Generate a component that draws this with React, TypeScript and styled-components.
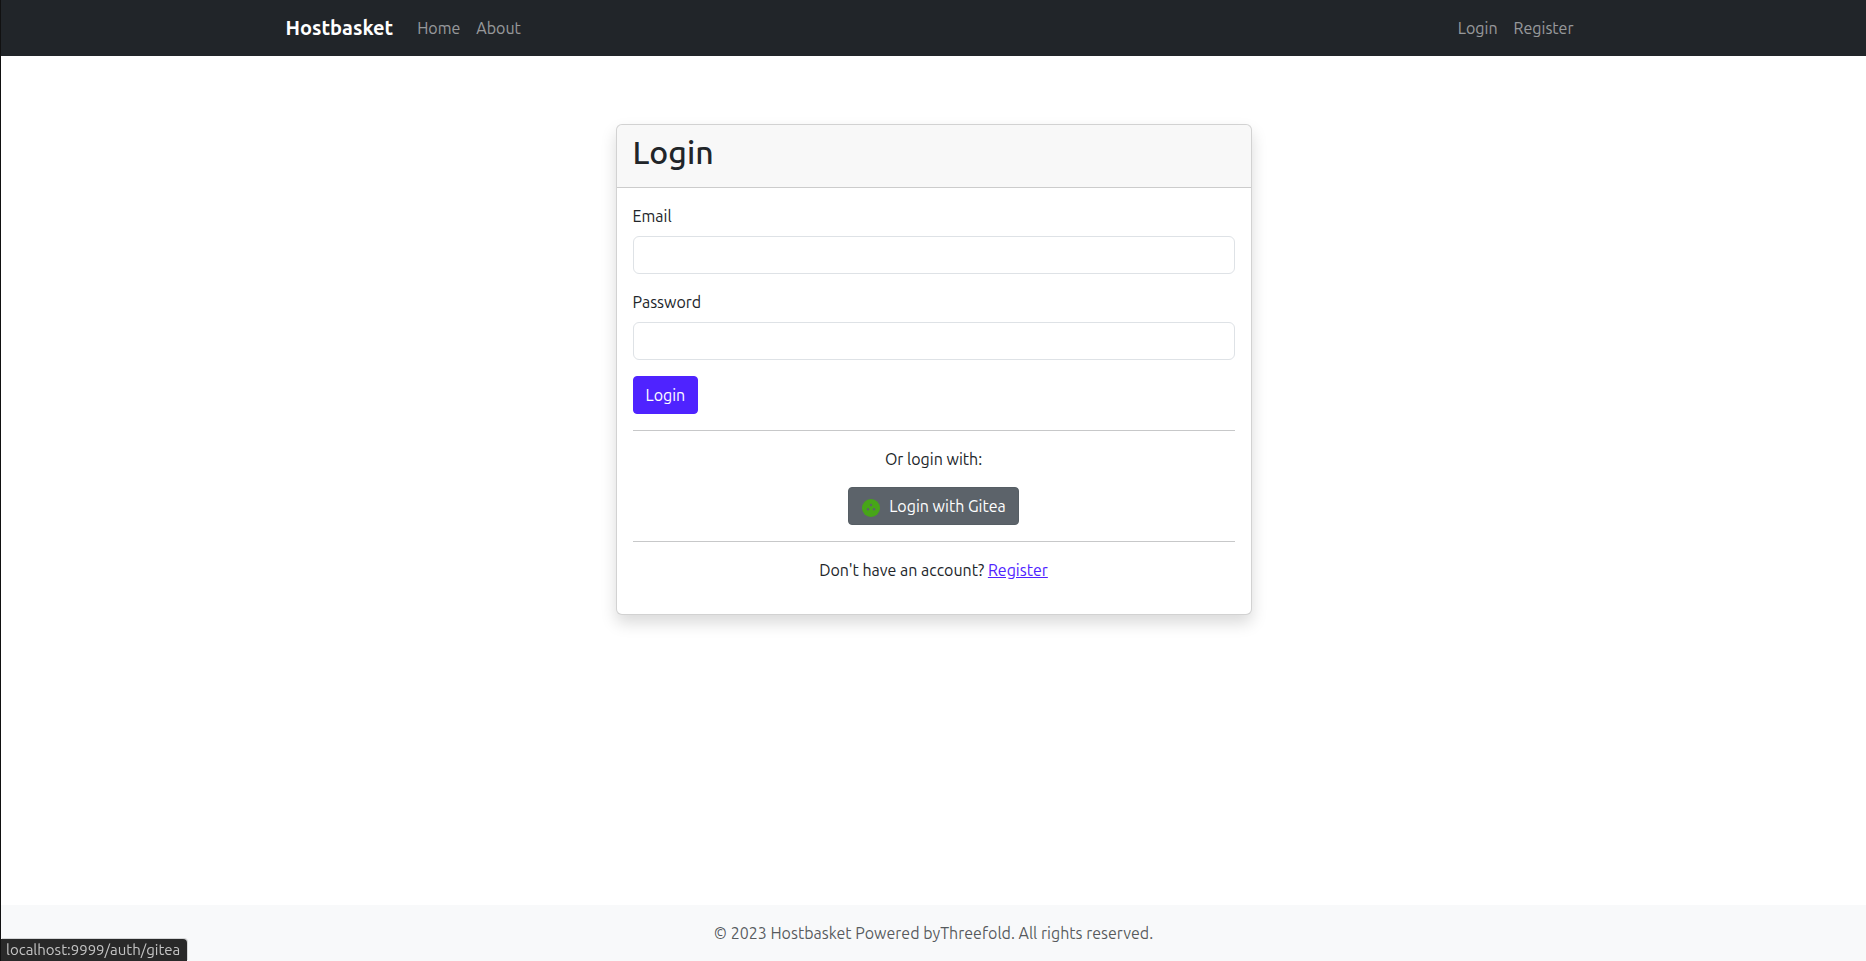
import React from "react";
import styled, { createGlobalStyle } from "styled-components";

const GlobalStyle = createGlobalStyle`
  *, *::before, *::after { box-sizing: border-box; }
  body {
    margin: 0;
    background: #fff;
    color: #212529;
    font-family: Ubuntu, "Noto Sans", "Liberation Sans", sans-serif;
    font-size: 16px;
    line-height: 24px;
  }
`;

const Page = styled.div`
  display: flex;
  flex-direction: column;
  min-height: 100vh;
  border-left: 1px solid #111;
`;

const Navbar = styled.nav`
  background: #212529;
  padding: 8px 0;
`;

const Container = styled.div`
  width: 100%;
  max-width: 1320px;
  margin: 0 auto;
  padding: 0 12px;
`;

const NavContainer = styled(Container)`
  display: flex;
  align-items: center;
`;

const Brand = styled.a`
  margin-right: 16px;
  padding: 5px 0;
  color: #fff;
  font-size: 20px;
  line-height: 30px;
  font-weight: 700;
  text-decoration: none;
`;

const NavList = styled.ul<{ $end?: boolean }>`
  display: flex;
  margin: 0 0 0 ${(p) => (p.$end ? "auto" : "0")};
  padding: 0;
  list-style: none;
`;

const NavLink = styled.a`
  display: block;
  padding: 8px;
  color: rgba(255, 255, 255, 0.55);
  text-decoration: none;
`;

const Main = styled.main`
  flex: 1 0 auto;
  padding-top: 68px;
`;

const Row = styled.div`
  display: flex;
  justify-content: center;
  margin: 0 -12px;
`;

const CardColumn = styled.div`
  flex: 0 0 50%;
  padding: 0 12px;
`;

const Card = styled.section`
  border: 1px solid rgba(0, 0, 0, 0.176);
  border-radius: 6px;
  background: #fff;
  box-shadow: 0 8px 16px rgba(0, 0, 0, 0.15);
`;

const CardHeader = styled.header`
  padding: 8px 16px 16px;
  border-bottom: 1px solid rgba(0, 0, 0, 0.176);
  border-radius: 5px 5px 0 0;
  background: rgba(33, 37, 41, 0.03);
`;

const Title = styled.h2`
  margin: 0;
  font-size: 32px;
  line-height: 38px;
  font-weight: 500;
`;

const CardBody = styled.div`
  padding: 16px;
`;

const Field = styled.div`
  display: flex;
  flex-direction: column;
  gap: 8px;
  margin-bottom: 16px;
`;

const Input = styled.input`
  width: 100%;
  height: 38px;
  padding: 6px 12px;
  border: 1px solid #dee2e6;
  border-radius: 6px;
  background: #fff;
  color: inherit;
  font: inherit;
`;

const Button = styled.button<{ $tone: "primary" | "secondary" }>`
  padding: 6px 12px;
  border: 1px solid ${(p) => (p.$tone === "primary" ? "#4f23ff" : "#565e64")};
  border-radius: 4px;
  background: ${(p) => (p.$tone === "primary" ? "#4f23ff" : "#5c636a")};
  color: #fff;
  font: inherit;
  cursor: pointer;
`;

const Divider = styled.hr`
  margin: 16px 0;
  border: 0;
  border-top: 1px solid #212529;
  opacity: 0.25;
`;

const Centered = styled.div`
  text-align: center;
`;

const Text = styled.p`
  margin: 0 0 16px;
`;

const TextLink = styled.a`
  color: #4f23ff;
  text-decoration: underline;
`;

const Icon = styled.svg`
  width: 20px;
  height: 20px;
  margin-right: 8px;
  vertical-align: middle;
`;

const Footer = styled.footer`
  padding: 16px 0;
  background: #f8f9fa;
  color: rgba(33, 37, 41, 0.75);
  text-align: center;
`;

const StatusBubble = styled.div`
  position: fixed;
  left: 1px;
  bottom: 0;
  padding: 0 7px 0 5px;
  border-top-right-radius: 4px;
  background: #292929;
  box-shadow: 1px -1px 0 #d5d6d7;
  color: #c4c4c4;
  font-size: 15px;
  line-height: 22px;
`;

function GiteaIcon() {
  return (
    <Icon viewBox="0 0 20 20" aria-hidden="true">
      <circle cx="10" cy="10" r="9" fill="#47a518" />
      <g fill="#5c636a">
        <circle cx="10" cy="7" r="1.2" />
        <circle cx="7" cy="11.3" r="1.2" />
        <circle cx="13" cy="11.3" r="1.2" />
      </g>
    </Icon>
  );
}

export default function App() {
  return (
    <>
      <GlobalStyle />
      <Page>
        <Navbar>
          <NavContainer>
            <Brand href="#">Hostbasket</Brand>
            <NavList>
              <li><NavLink href="#">Home</NavLink></li>
              <li><NavLink href="#about">About</NavLink></li>
            </NavList>
            <NavList $end>
              <li><NavLink href="#login">Login</NavLink></li>
              <li><NavLink href="#register">Register</NavLink></li>
            </NavList>
          </NavContainer>
        </Navbar>

        <Main>
          <Container>
            <Row>
              <CardColumn>
                <Card>
                  <CardHeader>
                    <Title>Login</Title>
                  </CardHeader>
                  <CardBody>
                    <form onSubmit={(e) => e.preventDefault()}>
                      <Field>
                        <label htmlFor="email">Email</label>
                        <Input id="email" name="email" type="email" />
                      </Field>
                      <Field>
                        <label htmlFor="password">Password</label>
                        <Input id="password" name="password" type="password" />
                      </Field>
                      <Button type="submit" $tone="primary">Login</Button>
                    </form>
                    <Divider />
                    <Centered>
                      <Text>Or login with:</Text>
                      <Button type="button" $tone="secondary">
                        <GiteaIcon />
                        Login with Gitea
                      </Button>
                    </Centered>
                    <Divider />
                    <Centered>
                      <Text>
                        Don't have an account? <TextLink href="#register">Register</TextLink>
                      </Text>
                    </Centered>
                  </CardBody>
                </Card>
              </CardColumn>
            </Row>
          </Container>
        </Main>

        <Footer>© 2023 Hostbasket Powered byThreefold. All rights reserved.</Footer>
      </Page>
      <StatusBubble>localhost:9999/auth/gitea</StatusBubble>
    </>
  );
}
